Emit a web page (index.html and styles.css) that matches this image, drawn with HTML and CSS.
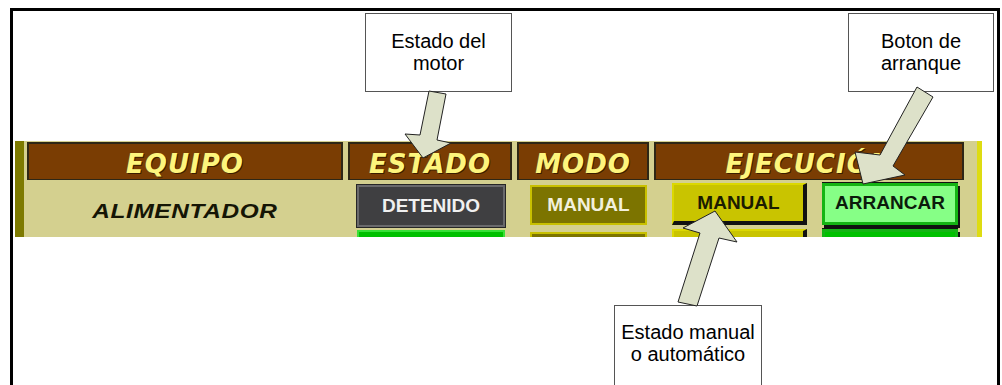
FILE: index.html
```html
<!DOCTYPE html>
<html lang="es">
<head>
  <meta charset="UTF-8" />
  <meta name="viewport" content="width=device-width, initial-scale=1.0" />
  <title>Panel de motor</title>
  <link rel="stylesheet" href="styles.css">
</head>
<body>
  <div class="frame">
    <div class="top-notes">
      <div class="note note-motor">Estado del<br>motor</div>
      <div class="note note-boton">Boton de<br>arranque</div>
    </div>

    <div class="panel">
      <div class="panel-grid">
        <div class="head">EQUIPO</div>
        <div class="head">ESTADO</div>
        <div class="head">MODO</div>
        <div class="head">EJECUCIÓN</div>

        <div class="equipo"><span class="equipo-name">ALIMENTADOR</span></div>
        <div class="cell"><span class="btn btn-stop">DETENIDO</span></div>
        <div class="cell"><span class="btn btn-mode">MANUAL</span></div>
        <div class="cell exec">
          <span class="btn btn-manual">MANUAL</span>
          <span class="btn btn-start">ARRANCAR</span>
        </div>

        <div class="equipo"></div>
        <div class="cell next"><span class="btn btn-run"></span></div>
        <div class="cell next"><span class="btn btn-mode"></span></div>
        <div class="cell exec next">
          <span class="btn btn-manual"></span>
          <span class="btn btn-start"></span>
        </div>
      </div>
    </div>

    <div class="bottom-notes">
      <div class="note note-modo">Estado manual<br>o automático</div>
    </div>
  </div>

  <svg class="arrows" width="1002" height="385" viewBox="0 0 1002 385">
    <polygon points="429,91 446,94 437,140 451,143 423,158 405,134 420,135" />
    <polygon points="917,87 933,97 893,166 905,175 863,184 855,152 880,155" />
    <polygon points="715,211 737,242 719,238 697,306 678,302 700,233 683,228" />
  </svg>
</body>
</html>
```

FILE: styles.css
```css
html, body {
  margin: 0;
  height: 385px;
  overflow: hidden;
  background: #fff;
}
body {
  position: relative;
  font-family: "Liberation Sans", Arial, sans-serif;
}
.frame {
  margin: 8px 2px 0 10px;
  height: 374px;
  border: 3px solid #000;
  border-bottom: 0;
}

/* callouts */
.top-notes {
  display: flex;
  margin-top: 2px;
}
.note {
  box-sizing: border-box;
  height: 79px;
  border: 1px solid #555;
  background: #fff;
  color: #000;
  font-size: 20px;
  line-height: 22px;
  text-align: center;
  padding-top: 16px;
}
.note-motor {
  width: 147px;
  margin-left: 352px;
}
.note-boton {
  width: 146px;
  margin-left: auto;
  margin-right: 3px;
}
.bottom-notes {
  margin-top: 68px;
}
.note-modo {
  width: 148px;
  height: 90px;
  margin-left: 601px;
  padding-top: 15px;
}

/* HMI panel */
.panel {
  box-sizing: border-box;
  margin: 49px 0 0 2px;
  width: 967px;
  height: 96px;
  overflow: hidden;
  background: #d4d08f;
  border-left: 9px solid #7d7a00;
  border-right: 5px solid #dedc12;
  padding: 1px 0 0 3px;
}
.panel-grid {
  display: grid;
  grid-template-columns: 316px 164px 132px 310px;
  grid-template-rows: 38px 49px 40px;
  column-gap: 5px;
  align-items: start;
}
.head {
  box-sizing: border-box;
  height: 38px;
  background: #7a3d03;
  border: 2px solid #2e2716;
  border-bottom-width: 1px;
  padding-top: 5px;
  line-height: 30px;
  text-align: center;
  font-family: "DejaVu Sans", sans-serif;
  font-size: 26px;
  font-weight: bold;
  font-style: italic;
  letter-spacing: 1px;
  color: #fdf57c;
  text-shadow: 1px 1px 0 #3a1e00;
}
.equipo {
  padding-top: 19px;
  line-height: 24px;
  text-align: center;
  font-size: 20px;
  font-weight: bold;
  font-style: italic;
  color: #151505;
}
.equipo-name {
  display: inline-block;
  letter-spacing: 0.5px;
  transform: scaleX(1.22);
}
.cell {
  display: flex;
}
.btn {
  box-sizing: border-box;
  display: block;
  text-align: center;
  font-size: 19px;
  font-weight: bold;
}
.btn-stop {
  width: 148px;
  height: 42px;
  margin: 5px 0 0 9px;
  background: #3f3f41;
  border: 2px solid #6a6a6c;
  box-shadow: 0 0 0 1px #262626;
  line-height: 38px;
  color: #f0f0f0;
}
.btn-run {
  width: 148px;
  height: 42px;
  margin: 1px 0 0 9px;
  background: #00c000;
  border: 2px solid #38e038;
}
.btn-mode {
  width: 117px;
  height: 40px;
  margin: 5px 0 0 13px;
  background: #7c7400;
  border: 2px solid #c8c000;
  line-height: 36px;
  color: #f2f0dc;
}
.btn-manual {
  width: 135px;
  height: 42px;
  margin: 3px 0 0 18px;
  background: #c9c400;
  border: 2px solid #dcd800;
  border-right: 4px solid #111;
  border-bottom: 4px solid #111;
  line-height: 36px;
  color: #1c1c00;
}
.btn-start {
  width: 136px;
  height: 42px;
  margin: 3px 0 0 15px;
  background: #86ff86;
  border: 3px solid #14b414;
  box-shadow: 2px 3px 0 #111, 0 -1px 0 #111;
  line-height: 34px;
  color: #0c1c0c;
}
.next .btn-mode {
  margin-top: 3px;
}
.next .btn-manual,
.next .btn-start {
  margin-top: 0;
}
.next .btn-start {
  background: #00c000;
}

/* callout arrows */
.arrows {
  position: absolute;
  top: 0;
  left: 0;
  pointer-events: none;
}
.arrows polygon {
  fill: #dde1c9;
  stroke: #222;
  stroke-width: 1;
  stroke-linejoin: miter;
}
```
